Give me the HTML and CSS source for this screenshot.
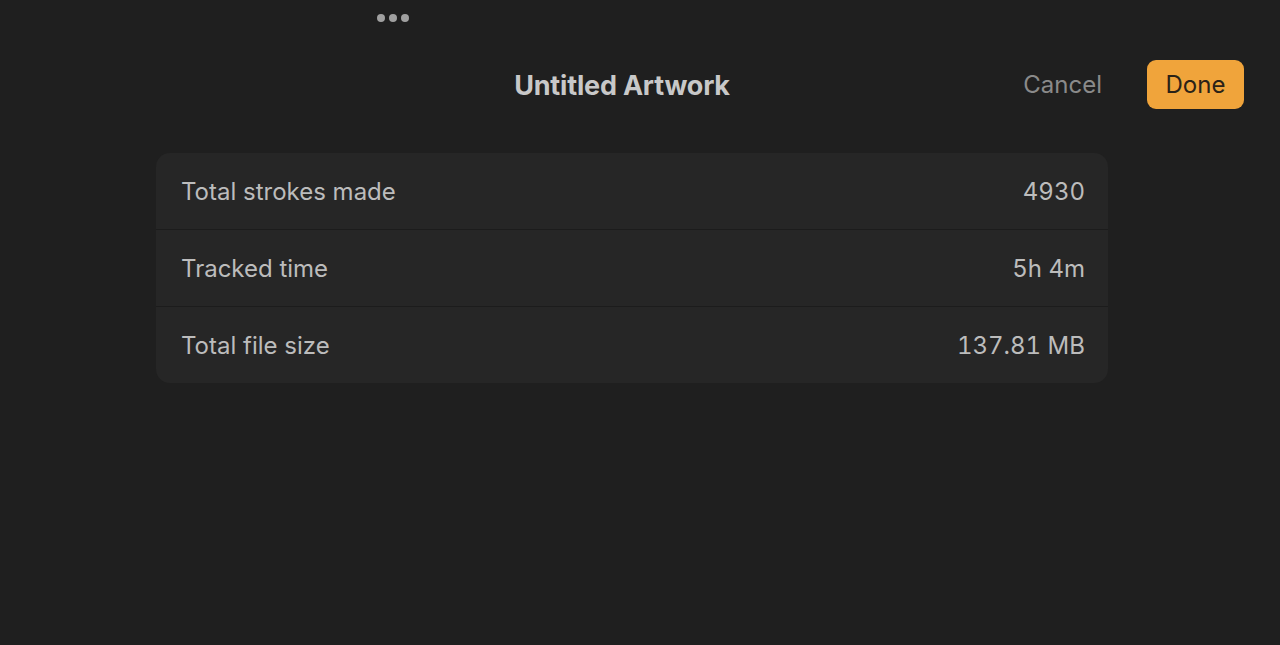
FILE: index.html
```html
<!DOCTYPE html>
<html>
<head>
<meta charset="utf-8">
<link rel="stylesheet" href="styles.css">
</head>
<body>
<div class="handle"><span></span><span></span><span></span></div>
<header class="bar">
  <h1 class="title">Untitled Artwork</h1>
  <div class="actions">
    <button class="cancel">Cancel</button>
    <button class="done">Done</button>
  </div>
</header>
<section class="card">
  <div class="row"><span class="label">Total strokes made</span><span class="value">4930</span></div>
  <div class="row"><span class="label">Tracked time</span><span class="value">5h 4m</span></div>
  <div class="row"><span class="label">Total file size</span><span class="value">137.81 MB</span></div>
</section>
</body>
</html>
```
FILE: styles.css
```css
html, body { margin: 0; padding: 0; }
body {
  width: 1280px;
  height: 645px;
  background: #1f1f1f;
  font-family: Inter, "Noto Sans", sans-serif;
  color: #bdbdbd;
  overflow: hidden;
}
.handle {
  display: flex;
  gap: 4px;
  padding-top: 14px;
  margin-left: 377px;
  height: 8px;
}
.handle span {
  width: 8px;
  height: 8px;
  border-radius: 50%;
  background: #a0a0a0;
}
.bar {
  position: relative;
  height: 48px;
  margin-top: 38px;
  display: flex;
  justify-content: flex-end;
  align-items: center;
  padding-right: 36px;
}
.title {
  position: absolute;
  left: 0;
  right: 36px;
  top: 1px;
  margin: 0;
  text-align: center;
  font-size: 27px;
  font-weight: 700;
  line-height: 50px;
  color: #c8c8c8;
  letter-spacing: -0.2px;
}
.actions { display: flex; align-items: center; gap: 45px; position: relative; }
button {
  font-family: inherit;
  font-size: 24px;
  border: none;
  background: none;
  padding: 0;
  cursor: pointer;
}
.cancel { color: #8a8a8a; }
.done {
  background: #f0a43b;
  color: #2a2217;
  width: 97px;
  height: 49px;
  border-radius: 9px;
}
.card {
  margin: 45px 0 0 156px;
  width: 952px;
  background: #262626;
  border-radius: 14px;
  overflow: hidden;
}
.row {
  display: flex;
  justify-content: space-between;
  align-items: center;
  height: 76px;
  padding: 0 23px 0 25px;
  font-size: 24px;
  color: #bcbcbc;
}
.value {
  font-feature-settings: "tnum";
}
.row + .row { border-top: 1px solid #1c1c1c; }
```
